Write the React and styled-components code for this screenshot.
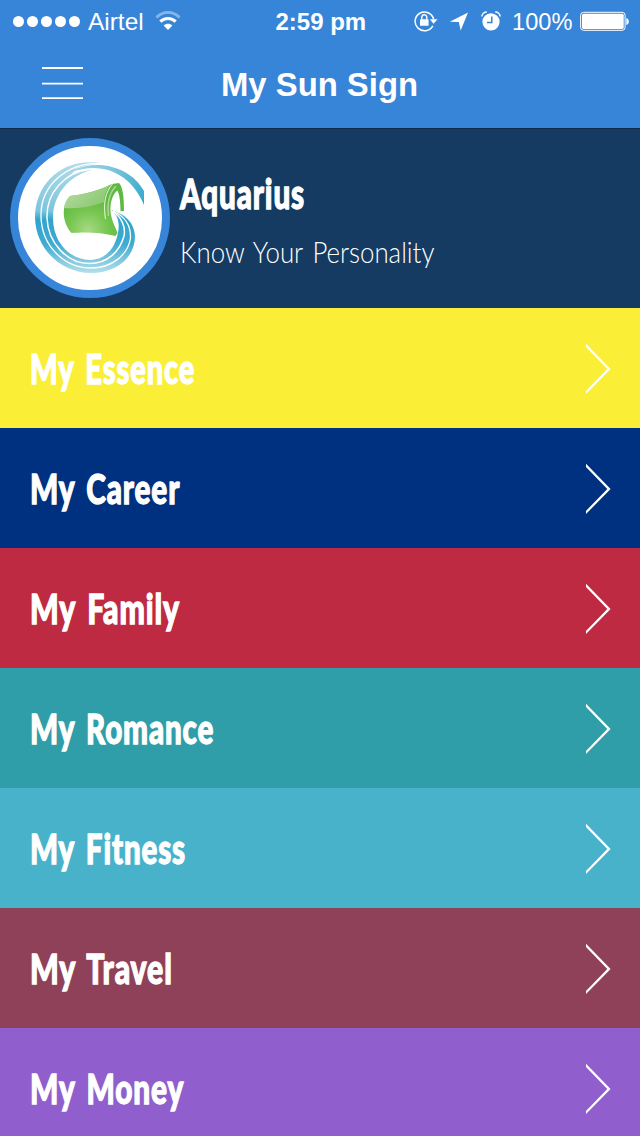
import React, { useLayoutEffect, useRef, useState } from 'react';
import styled, { createGlobalStyle } from 'styled-components';

const GlobalStyle = createGlobalStyle`
  * { box-sizing: border-box; }
  body { margin: 0; background: #3785d8; color: #fff; }
`;

const Screen = styled.main`
  width: 640px;
  height: 1136px;
  overflow: hidden;
  display: flex;
  flex-direction: column;
  font-family: 'Liberation Sans', Arial, sans-serif;
`;

const StatusBar = styled.div`
  height: 40px;
  flex: none;
  display: grid;
  grid-template-columns: 1fr auto 1fr;
  align-items: center;
  padding: 0 11px 0 13px;
  background: #3785d8;
  font-size: 24px;
  line-height: 40px;
`;

const StatusGroup = styled.div`
  display: flex;
  align-items: center;
  height: 40px;
  justify-content: ${(p) => (p.$end ? 'flex-end' : 'flex-start')};
`;

const StatusText = styled.div`
  padding-top: 2px;
  margin-left: ${(p) => p.$gap || 0}px;
  font-weight: ${(p) => (p.$bold ? 700 : 400)};
`;

const Signal = styled.div`
  display: flex;
  gap: 3px;
  margin-right: 8px;
`;

const Dot = styled.i`
  width: 11px;
  height: 11px;
  border-radius: 50%;
  background: #fff;
`;

const Glyph = styled.svg`
  display: block;
  flex: none;
  margin-left: ${(p) => p.$gap || 0}px;
`;

const NavBar = styled.header`
  height: 88px;
  flex: none;
  display: grid;
  grid-template-columns: 125px 1fr 125px;
  align-items: center;
  padding-bottom: 1px;
  background: #3785d8;
`;

const MenuButton = styled.button`
  justify-self: start;
  margin-left: 42px;
  padding: 0;
  border: 0;
  background: none;
`;

const Title = styled.h1`
  margin: 0;
  display: flex;
  justify-content: center;
  padding-right: 1px;
  font-size: 34px;
  line-height: 40px;
  font-weight: 700;
`;

const Profile = styled.section`
  height: 180px;
  flex: none;
  display: flex;
  align-items: center;
  padding: 0 0 1px 10px;
  border-top: 1px solid #12294a;
  background: #153b63;
`;

const Avatar = styled.div`
  width: 160px;
  height: 160px;
  flex: none;
  border: 8px solid #3785d8;
  border-radius: 50%;
  background: #fff;
  overflow: hidden;
`;

const ProfileText = styled.div`
  margin-left: 10px;
  display: flex;
  flex-direction: column;
  height: 100%;
  padding-top: 39px;
`;

const Heading = styled.div`
  font-family: Lato, sans-serif;
  font-weight: 900;
  font-size: 41px;
  line-height: 52px;
  letter-spacing: 1.2px;
  word-spacing: 5px;
  -webkit-text-stroke: 1.3px #fff;
`;

const Tagline = styled.div`
  margin-top: 14px;
  font-family: Lato, sans-serif;
  font-weight: 300;
  font-size: 29px;
  line-height: 36px;
  word-spacing: 3px;
`;

const Row = styled.li`
  height: 120px;
  flex: none;
  display: flex;
  align-items: center;
  justify-content: space-between;
  padding: 2px 29px 0 30px;
  background: ${(p) => p.$color};
`;

const List = styled.ul`
  margin: 0;
  padding: 0;
  list-style: none;
  display: flex;
  flex-direction: column;
`;

const FitBox = styled.span`
  display: block;
  width: ${(p) => p.$width}px;
  white-space: nowrap;
`;

const FitInner = styled.span`
  display: inline-block;
  transform-origin: 0 50%;
`;

/* Scales a line of text horizontally so that it fills the given width. */
function Fit({ width, children }) {
  const ref = useRef(null);
  const [scale, setScale] = useState(1);
  useLayoutEffect(() => {
    const measure = () => setScale(width / ref.current.offsetWidth);
    measure();
    document.fonts.ready.then(measure);
  }, [width, children]);
  return (
    <FitBox $width={width}>
      <FitInner ref={ref} style={{ transform: `scaleX(${scale})` }}>{children}</FitInner>
    </FitBox>
  );
}

const Wifi = () => (
  <Glyph $gap={11} width="26" height="20" viewBox="0 0 26 20" fill="none">
    <path d="M1.500 6.500C8-.3 18-.3 24.500 6.500" stroke="#fff" strokeOpacity=".4" strokeWidth="2.800" />
    <path d="M5.300 10.600C9.500 6.400 16.500 6.400 20.700 10.600" stroke="#fff" strokeWidth="3" />
    <path d="M13 19 8.600 14.500C11 12.200 15 12.200 17.400 14.500Z" fill="#fff" />
  </Glyph>
);

const RotationLock = () => (
  <Glyph width="24" height="22" viewBox="0 0 24 22" fill="none">
    <path d="M18.800 15.800A9.400 9.400 0 1 1 19.600 9" stroke="#fff" strokeWidth="1.500" />
    <path d="M15.800 9.200h7.700l-3.900 4.600z" fill="#fff" />
    <rect x="6" y="9.300" width="8.600" height="6.500" rx=".6" fill="#fff" />
    <path d="M7.800 9.500V7.500a2.500 2.700 0 0 1 5 0v2" stroke="#fff" strokeWidth="1.400" />
  </Glyph>
);

const Arrow = () => (
  <Glyph $gap={11} width="20" height="19" viewBox="0 0 20 19">
    <path d="M19 .5 11.700 18.500 9.800 10 .8 9.700Z" fill="#fff" />
  </Glyph>
);

const Alarm = () => (
  <Glyph $gap={12} width="20" height="20" viewBox="0 0 20 20" fill="none">
    <circle cx="10" cy="10.800" r="8.600" fill="#fff" />
    <path d="M.8 5.500A5 5 0 0 1 5.800 1M14.200 1a5 5 0 0 1 5 4.500" stroke="#fff" strokeWidth="1.500" />
    <path d="M10.800 5.500v6H6" stroke="#3785d8" strokeWidth="1.500" />
  </Glyph>
);

const Battery = () => (
  <Glyph $gap={8} width="49" height="20" viewBox="0 0 49 20" fill="none">
    <rect x=".6" y="1.300" width="44.500" height="18" rx="3" stroke="#fff" strokeWidth="1" />
    <rect x="2" y="2.700" width="41.700" height="15.200" rx="1.600" fill="#fff" />
    <path d="M46.300 7c3.300.5 3.300 6.500 0 7z" fill="#fff" />
  </Glyph>
);

const Chevron = () => (
  <Glyph width="25" height="52" viewBox="0 0 25 52" fill="none">
    <path d="M0 .8V4L21.300 26 0 47.900V51L24.600 26Z" fill="#fff" />
  </Glyph>
);

const Aquarius = () => (
  <Glyph width="144" height="144" viewBox="18 18 144 144" fill="none">
    <defs>
      <linearGradient id="water" x1="0" y1="34" x2="0" y2="145" gradientUnits="userSpaceOnUse">
        <stop stopColor="#b2dce8" />
        <stop offset=".44" stopColor="#7cc5dd" />
        <stop offset=".52" stopColor="#31a4cd" />
        <stop offset=".74" stopColor="#3fabd0" />
        <stop offset="1" stopColor="#b5dfea" />
      </linearGradient>
      <linearGradient id="tail" x1="60" y1="34" x2="144" y2="75" gradientUnits="userSpaceOnUse">
        <stop stopColor="#b2dce8" />
        <stop offset=".5" stopColor="#83c8dd" />
        <stop offset="1" stopColor="#35a9ce" />
      </linearGradient>
      <radialGradient id="jug" cx="88" cy="102" r="35" gradientUnits="userSpaceOnUse">
        <stop stopColor="#a7d984" />
        <stop offset=".55" stopColor="#77c650" />
        <stop offset="1" stopColor="#5eb842" />
      </radialGradient>
      <linearGradient id="gloss" x1="70" y1="58" x2="90" y2="82" gradientUnits="userSpaceOnUse">
        <stop stopColor="#b5dba3" />
        <stop offset="1" stopColor="#8fca75" />
      </linearGradient>
    </defs>
    <path d="M104 35.500C63 28 35 55 35 90C36 122 62 145 91 145C116 145 135 130 135 108C134 95 126 86 111 82C119 88 120 97 117.500 107C114 122 104 132 90 132C68 131 53 113 53 90C53 66 70 47 92 42C84 42 78 43 72 46L76 40L90 36.500Z" fill="url(#water)" />
    <path d="M70 43C101 29 132 41 144 63V77C134 52 112 37 86 40.500Q77 41.500 68 45Z" fill="url(#tail)" />
    <path d="M103 35.500C68 33 40 57 41 89C42 119 65 140 91 140C112 140 128 127 130.500 110C131 97 124 88 113 83" stroke="#fff" strokeWidth="1.300" />
    <path d="M90 41.300C65 44 46 65 47 90C48 115 67 135.500 89.500 135.500C108 135.500 120 123 124 108C126 98 121 89 113 83.500" stroke="#fff" strokeWidth="1.500" />
    <path d="M70 68C84 66.500 99 62.500 112 56L119 55C123 59 124 70 124 83L120.500 83.300C120.500 74 119.500 66 117.300 62.500C111 68 109 79 111.500 89C113 96 116 100 117.500 105L115.500 108C101 104 84 104 71.500 105C62 94 61 78 70 68Z" fill="url(#jug)" />
    <path d="M70 68C84 66.500 99 62.500 110 57C106 63 104 68 104 74C92 79 78 81 64 80Q65 73 70 68Z" fill="url(#gloss)" />
    <path d="M112.500 56C104.500 65 103.500 79 105.500 91" stroke="#dbf0cf" strokeWidth="1.100" />
    <path d="M116 58C108 66 107 79 108.500 88" stroke="#a8d78e" strokeWidth="1.600" />
  </Glyph>
);

const sections = [
  { label: 'My Essence', color: '#fbee37', width: 165 },
  { label: 'My Career', color: '#003180', width: 150 },
  { label: 'My Family', color: '#bd2a42', width: 150 },
  { label: 'My Romance', color: '#2f9ea8', width: 184 },
  { label: 'My Fitness', color: '#49b2cb', width: 156 },
  { label: 'My Travel', color: '#90415a', width: 143 },
  { label: 'My Money', color: '#905fcd', width: 154 },
];

export default function App() {
  return (
    <Screen>
      <GlobalStyle />
      <StatusBar>
        <StatusGroup>
          <Signal>{[0, 1, 2, 3, 4].map((i) => <Dot key={i} />)}</Signal>
          <StatusText><Fit width={56}>Airtel</Fit></StatusText>
          <Wifi />
        </StatusGroup>
        <StatusText $bold><Fit width={91}>2:59 pm</Fit></StatusText>
        <StatusGroup $end>
          <RotationLock />
          <Arrow />
          <Alarm />
          <StatusText $gap={11}><Fit width={60}>100%</Fit></StatusText>
          <Battery />
        </StatusGroup>
      </StatusBar>
      <NavBar>
        <MenuButton aria-label="Menu">
          <Glyph width="41" height="33" viewBox="0 0 41 33">
            <path d="M0 0h41v2H0zM0 15.700h41v1.800H0zM0 30.300h41v1.700H0z" fill="#fff" />
          </Glyph>
        </MenuButton>
        <Title><Fit width={197}>My Sun Sign</Fit></Title>
      </NavBar>
      <Profile>
        <Avatar><Aquarius /></Avatar>
        <ProfileText>
          <Heading><Fit width={125}>Aquarius</Fit></Heading>
          <Tagline><Fit width={254}>Know Your Personality</Fit></Tagline>
        </ProfileText>
      </Profile>
      <List>
        {sections.map((s) => (
          <Row key={s.label} $color={s.color}>
            <Heading><Fit width={s.width}>{s.label}</Fit></Heading>
            <Chevron />
          </Row>
        ))}
      </List>
    </Screen>
  );
}
